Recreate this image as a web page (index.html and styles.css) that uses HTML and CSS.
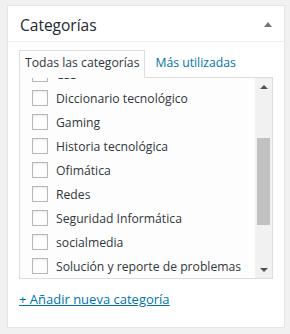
FILE: index.html
```html
<!DOCTYPE html>
<html lang="es">
<head>
    <meta charset="UTF-8">
    <title>Categorías</title>
    <link rel="stylesheet" href="styles.css">
</head>
<body>
    <div class="postbox">
        <div class="postbox-header">
            <h2>Categorías</h2>
            <span class="toggle-arrow"></span>
        </div>
        <div class="inside">
            <ul class="tabs">
                <li class="tab active">Todas las categorías</li>
                <li class="tab"><a href="#">Más utilizadas</a></li>
            </ul>
            <div class="panel">
                <div class="list-viewport">
                    <ul class="checklist">
                        <li><input type="checkbox"><span>CSS</span></li>
                        <li><input type="checkbox"><span>Diccionario tecnológico</span></li>
                        <li><input type="checkbox"><span>Gaming</span></li>
                        <li><input type="checkbox"><span>Historia tecnológica</span></li>
                        <li><input type="checkbox"><span>Ofimática</span></li>
                        <li><input type="checkbox"><span>Redes</span></li>
                        <li><input type="checkbox"><span>Seguridad Informática</span></li>
                        <li><input type="checkbox"><span>socialmedia</span></li>
                        <li><input type="checkbox"><span>Solución y reporte de problemas</span></li>
                    </ul>
                </div>
                <div class="scrollbar">
                    <span class="sb-btn up"></span>
                    <div class="sb-track"><div class="sb-thumb"></div></div>
                    <span class="sb-btn down"></span>
                </div>
            </div>
            <a class="add-link" href="#">+ Añadir nueva categoría</a>
        </div>
    </div>
</body>
</html>
```

FILE: styles.css
```css
body, html {
    margin: 0;
    padding: 0;
}
body {
    background-color: #f1f1f1;
    padding: 5px 5px 0 7px;
    font-family: "Open Sans", "Liberation Sans", sans-serif;
    font-size: 12.2px;
    color: #32373c;
}
.postbox {
    box-sizing: border-box;
    height: 323px;
    background-color: #fff;
    border: 1px solid #e5e5e5;
    box-shadow: 0 1px 1px rgba(0,0,0,0.04);
}
.postbox-header {
    display: flex;
    align-items: center;
    justify-content: space-between;
    box-sizing: border-box;
    height: 36px;
    padding: 2px 12px 0 12px;
    border-bottom: 1px solid #eee;
}
.postbox-header h2 {
    margin: 0;
    font-size: 15.5px;
    font-weight: 500;
    color: #23282d;
}
.toggle-arrow {
    width: 0;
    height: 0;
    border-left: 4px solid transparent;
    border-right: 4px solid transparent;
    border-bottom: 5px solid #72777c;
}
.inside {
    padding: 8px 11px 0 11px;
}
.tabs {
    display: flex;
    margin: 0 0 -1px 0;
    padding: 0;
    list-style: none;
}
.tab {
    padding: 3px 5px 5px 5px;
    line-height: 18px;
    border: 1px solid transparent;
}
.tab.active {
    position: relative;
    background-color: #fdfdfd;
    border-color: #ddd;
    border-bottom-color: #fdfdfd;
}
.tab a {
    color: #0073aa;
    text-decoration: none;
}
.tab + .tab {
    margin-left: 4px;
}
.panel {
    display: flex;
    height: 202px;
    box-sizing: border-box;
    border: 1px solid #ddd;
    background-color: #fdfdfd;
}
.list-viewport {
    flex: 1;
    overflow: hidden;
}
.checklist {
    margin: -16px 0 0 0;
    padding: 0 0 0 12px;
    list-style: none;
}
.checklist li {
    display: flex;
    align-items: center;
    height: 24px;
    white-space: nowrap;
}
.checklist input {
    appearance: none;
    -webkit-appearance: none;
    flex-shrink: 0;
    width: 16px;
    height: 16px;
    margin: 0 8px 0 0;
    border: 1px solid #b4b9be;
    background-color: #fff;
    box-shadow: inset 0 1px 2px rgba(0,0,0,0.1);
}
.scrollbar {
    display: flex;
    flex-direction: column;
    width: 17px;
    background-color: #f1f1f1;
}
.sb-btn {
    display: flex;
    align-items: center;
    justify-content: center;
    height: 17px;
}
.sb-btn.up::before,
.sb-btn.down::before {
    content: "";
    width: 0;
    height: 0;
    border-left: 4px solid transparent;
    border-right: 4px solid transparent;
}
.sb-btn.up::before {
    border-bottom: 4px solid #505050;
}
.sb-btn.down::before {
    border-top: 4px solid #505050;
}
.sb-track {
    flex: 1;
}
.sb-thumb {
    height: 87px;
    margin: 43px 2px 0 2px;
    background-color: #c1c1c1;
}
.add-link {
    display: inline-block;
    margin-top: 11px;
    font-size: 13px;
    line-height: 18px;
    color: #0073aa;
    text-decoration: underline;
}
```
